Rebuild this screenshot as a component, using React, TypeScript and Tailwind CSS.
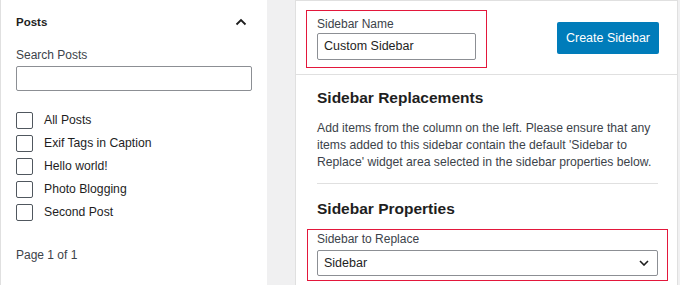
const posts = ["All Posts", "Exif Tags in Caption", "Hello world!", "Photo Blogging", "Second Post"];

function ChevronUp() {
  return (
    <svg width="12" height="8" viewBox="0 0 12 8" fill="none">
      <path d="M1.5 6.5 L6 2 L10.5 6.5" stroke="#1e1e1e" strokeWidth="1.8" />
    </svg>
  );
}

function ChevronDown() {
  return (
    <svg width="10" height="6" viewBox="0 0 10 6" fill="none">
      <path d="M1 1 L5 5 L9 1" stroke="#1e1e1e" strokeWidth="1.6" />
    </svg>
  );
}

export default function App() {
  return (
    <div
      className="w-[680px] h-[285px] overflow-hidden bg-[#f0f0f1] flex text-[#1e1e1e]"
      style={{ fontFamily: "'Liberation Sans', Arial, sans-serif" }}
    >
      {/* Posts panel */}
      <div className="w-[267px] h-full bg-white border-l border-[#e0e0e0] pl-[15px] pr-[20px] flex flex-col">
        <div className="h-[44px] flex items-center justify-between">
          <span className="text-[11.5px] font-bold leading-4">Posts</span>
          <ChevronUp />
        </div>
        <div className="mt-[3px] text-[12px] leading-4 text-[#3c434a]">Search Posts</div>
        <div className="mt-[3px] h-[25px] w-[236px] border border-[#8c8f94] rounded-[2px]" />
        <div className="mt-[21px] flex flex-col gap-[7px]">
          {posts.map((p) => (
            <div key={p} className="h-[16px] flex items-center gap-[11px]">
              <div className="w-[17px] h-[17px] border border-[#50575e] rounded-[2px] shrink-0" />
              <span className="text-[12.2px] leading-[17px] text-[#1e1e1e]">{p}</span>
            </div>
          ))}
        </div>
        <div className="mt-[27px] text-[12px] leading-4 text-[#3c434a]">Page 1 of 1</div>
      </div>

      {/* Sidebar settings panel */}
      <div className="ml-[28px] w-[383px] h-full bg-white border-x border-t border-[#e0e0e0] flex flex-col">
        <div className="h-[74px] border-b border-[#e0e0e0] flex items-start pl-[10px] pr-[18px]">
          <div className="mt-[9px] w-[181px] h-[58px] border border-[#e3173b] px-[10px] pt-[5px]">
            <div className="text-[12px] leading-4 text-[#3c434a]">Sidebar Name</div>
            <div className="mt-[1px] h-[27px] border border-[#8c8f94] rounded-[2px] flex items-center px-[6px] text-[12.5px]">
              Custom Sidebar
            </div>
          </div>
          <button className="ml-auto mt-[21px] w-[102px] h-[32px] bg-[#007cba] rounded-[2px] text-white text-[12.5px]">
            Create Sidebar
          </button>
        </div>

        <div className="pl-[21px] pr-[19px] flex flex-col">
          <h2 className="mt-[11px] text-[15.5px] leading-6 font-bold">Sidebar Replacements</h2>
          <p className="mt-[10px] text-[12.2px] leading-[17px] text-[#3c434a]">
            Add items from the column on the left. Please ensure that any items added to this sidebar contain the default 'Sidebar to Replace' widget area selected in the sidebar properties below.
          </p>
          <div className="mt-[12px] h-px bg-[#e0e0e0]" />
          <h2 className="mt-[13px] text-[15.5px] leading-6 font-bold">Sidebar Properties</h2>
          <div className="mt-[8px] -mx-[10px] h-[52px] border border-[#e3173b] px-[9px] pt-[1px]">
            <div className="text-[12px] leading-4 text-[#3c434a]">Sidebar to Replace</div>
            <div className="mt-[3px] h-[26px] border border-[#8c8f94] rounded-[2px] flex items-center justify-between pl-[6px] pr-[8px] text-[12.5px]">
              <span>Sidebar</span>
              <ChevronDown />
            </div>
          </div>
        </div>
      </div>
    </div>
  );
}
